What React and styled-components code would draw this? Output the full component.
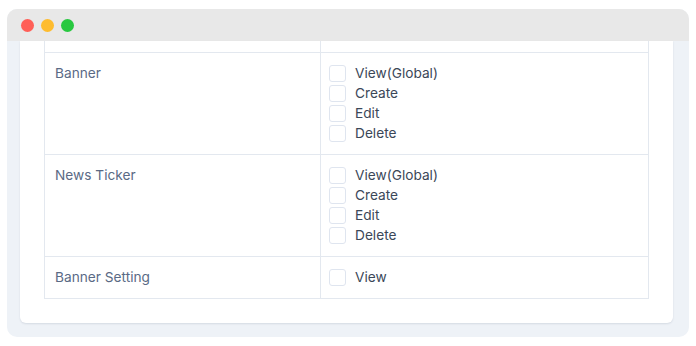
import React from "react";
import styled, { createGlobalStyle } from "styled-components";

const GlobalStyle = createGlobalStyle`
    body {
        margin: 0;
        background: #ffffff;
        font-family: Inter, "Noto Sans", sans-serif;
    }
`;

const Page = styled.div`
    padding: 9px 7px 9px 7px;
    width: 696px;
    height: 346px;
    box-sizing: border-box;
`;

const Window = styled.div`
    height: 328px;
    border-radius: 10px;
    background: #eef2f7;
    overflow: hidden;
    display: flex;
    flex-direction: column;
`;

const TitleBar = styled.div`
    height: 32px;
    flex: none;
    background: #e8e8e8;
    display: flex;
    align-items: center;
    gap: 7px;
    padding-left: 14px;
`;

const Dot = styled.span`
    width: 13px;
    height: 13px;
    border-radius: 50%;
    background: ${p => p.color};
`;

const Body = styled.div`
    flex: 1;
    padding: 0 16px 14px 13px;
    display: flex;
    flex-direction: column;
`;

const Card = styled.div`
    flex: 1;
    background: #ffffff;
    border-radius: 0 0 6px 6px;
    box-shadow: 0 1px 2px rgba(30, 50, 80, 0.12);
    padding: 0 24px 24px 24px;
`;

const Table = styled.div`
    border: 1px solid #e3e8ef;
    border-top: none;
`;

const Row = styled.div`
    display: grid;
    grid-template-columns: 276px 1fr;
    border-top: ${p => (p.$first ? "none" : "1px solid #e3e8ef")};
    min-height: ${p => p.$height || 0}px;
`;

const NameCell = styled.div`
    padding: ${p => (p.$empty ? "0" : "10px 10px 11px")};
    border-right: 1px solid #e3e8ef;
    font-size: 13.7px;
    line-height: 20px;
    color: #5a6a85;
`;

const PermCell = styled.div`
    padding: ${p => (p.$empty ? "0" : "10px 8px 11px")};
    display: flex;
    flex-direction: column;
`;

const Perm = styled.label`
    display: flex;
    align-items: center;
    gap: 9px;
    height: 20px;
    font-size: 13.7px;
    color: #3b4758;
`;

const Box = styled.span`
    width: 15px;
    height: 15px;
    border: 1px solid #dfe5ef;
    border-radius: 3px;
    background: #fff;
`;

const rows = [
    { name: "Banner", perms: ["View(Global)", "Create", "Edit", "Delete"] },
    { name: "News Ticker", perms: ["View(Global)", "Create", "Edit", "Delete"] },
    { name: "Banner Setting", perms: ["View"] },
];

export default function App() {
    return <Page>
        <GlobalStyle />
        <Window>
            <TitleBar>
                <Dot color="#ff5f57" />
                <Dot color="#febc2e" />
                <Dot color="#28c840" />
            </TitleBar>
            <Body>
                <Card>
                    <Table>
                        <Row $first $height={11}>
                            <NameCell $empty />
                            <PermCell $empty />
                        </Row>
                        {rows.map(r => <Row key={r.name}>
                            <NameCell>{r.name}</NameCell>
                            <PermCell>
                                {r.perms.map(p => <Perm key={p}>
                                    <Box />
                                    {p}
                                </Perm>)}
                            </PermCell>
                        </Row>)}
                    </Table>
                </Card>
            </Body>
        </Window>
    </Page>;
}
